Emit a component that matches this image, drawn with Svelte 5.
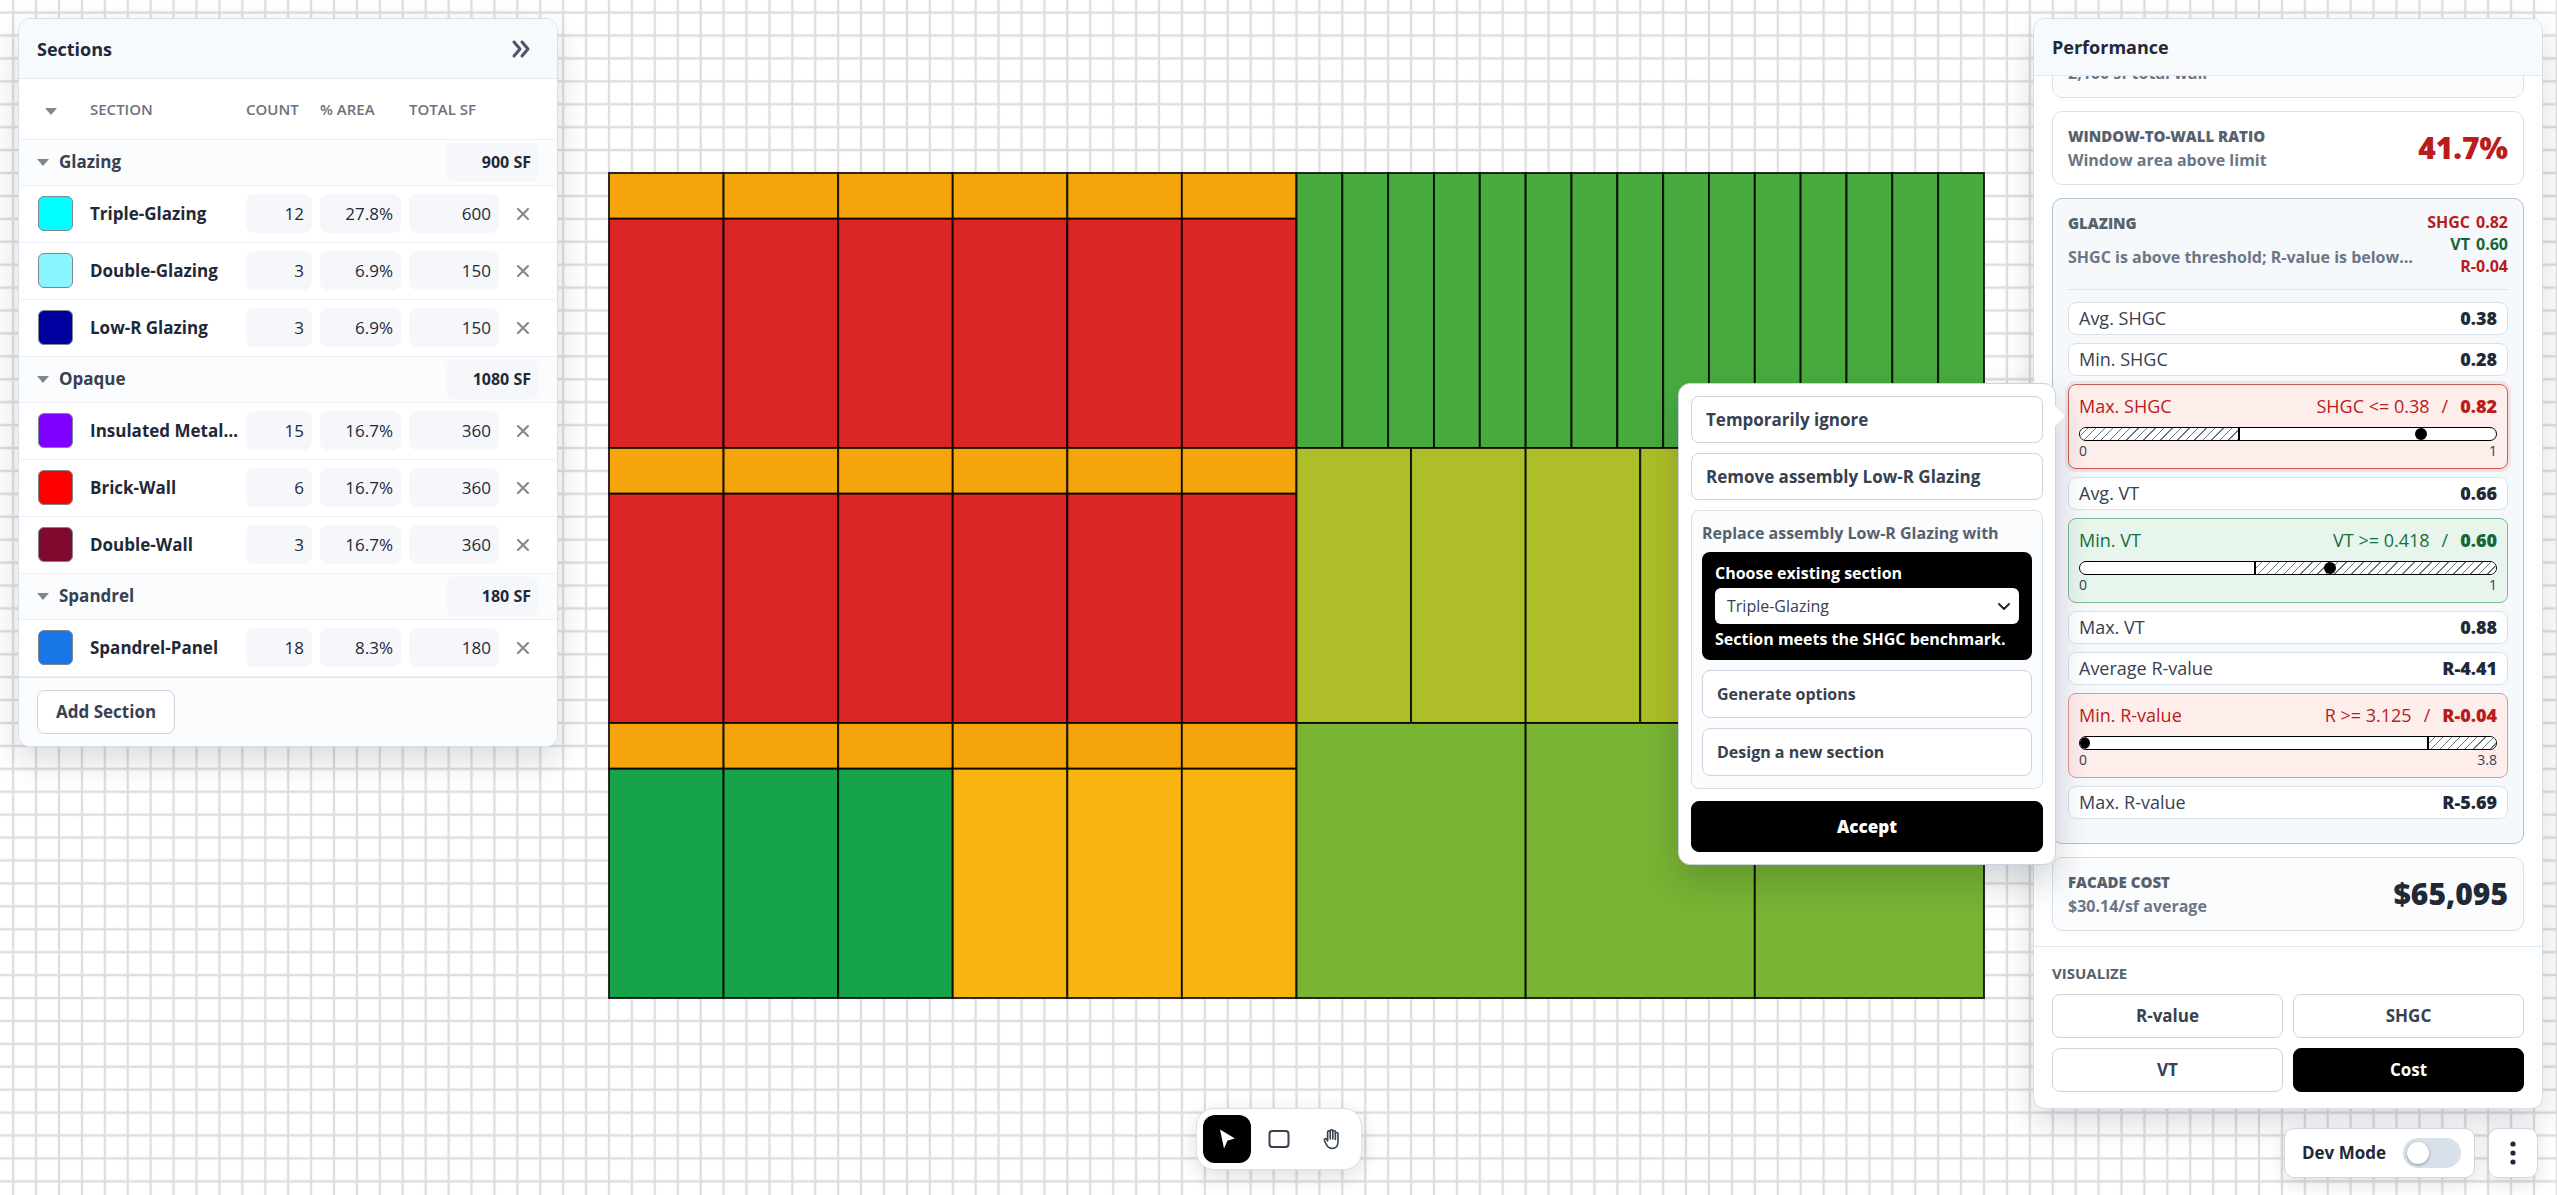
<script lang="ts">
	type Section = { name: string; color: string; count: number; area: string; sf: number };
	type Group = { name: string; total: string; rows: Section[] };
	type Metric = {
		label: string;
		value: string;
		rule?: string;
		status?: 'bad' | 'good';
		active?: boolean;
		max?: string;
		from?: number;
		to?: number;
		limit?: number;
		marker?: number;
	};

	const groups: Group[] = [
		{
			name: 'Glazing',
			total: '900 SF',
			rows: [
				{ name: 'Triple-Glazing', color: '#00ffff', count: 12, area: '27.8%', sf: 600 },
				{ name: 'Double-Glazing', color: '#88f5ff', count: 3, area: '6.9%', sf: 150 },
				{ name: 'Low-R Glazing', color: '#0000a0', count: 3, area: '6.9%', sf: 150 }
			]
		},
		{
			name: 'Opaque',
			total: '1080 SF',
			rows: [
				{ name: 'Insulated Metal Panel', color: '#8000ff', count: 15, area: '16.7%', sf: 360 },
				{ name: 'Brick-Wall', color: '#ff0000', count: 6, area: '16.7%', sf: 360 },
				{ name: 'Double-Wall', color: '#800a2d', count: 3, area: '16.7%', sf: 360 }
			]
		},
		{
			name: 'Spandrel',
			total: '180 SF',
			rows: [{ name: 'Spandrel-Panel', color: '#1777e5', count: 18, area: '8.3%', sf: 180 }]
		}
	];

	const metrics: Metric[] = [
		{ label: 'Avg. SHGC', value: '0.38' },
		{ label: 'Min. SHGC', value: '0.28' },
		{
			label: 'Max. SHGC',
			value: '0.82',
			rule: 'SHGC <= 0.38',
			status: 'bad',
			active: true,
			max: '1',
			from: 0,
			to: 38,
			limit: 38,
			marker: 82
		},
		{ label: 'Avg. VT', value: '0.66' },
		{
			label: 'Min. VT',
			value: '0.60',
			rule: 'VT >= 0.418',
			status: 'good',
			max: '1',
			from: 41.8,
			to: 100,
			limit: 41.8,
			marker: 60
		},
		{ label: 'Max. VT', value: '0.88' },
		{ label: 'Average R-value', value: 'R-4.41' },
		{
			label: 'Min. R-value',
			value: 'R-0.04',
			rule: 'R >= 3.125',
			status: 'bad',
			max: '3.8',
			from: 83.3,
			to: 100,
			limit: 83.3,
			marker: 1
		},
		{ label: 'Max. R-value', value: 'R-5.69' }
	];

	// Facade panels, in feet
	type Panel = { x: number; y: number; w: number; h: number; fill: string };

	function run(x: number, y: number, w: number, h: number, n: number, fill: string): Panel[] {
		return Array.from({ length: n }, (_, i) => ({ x: x + i * w, y, w, h, fill }));
	}

	const panels: Panel[] = [
		...run(0, 0, 5, 2, 6, '#f5a50b'),
		...run(0, 2, 5, 10, 6, '#dc2626'),
		...run(0, 12, 5, 2, 6, '#f5a50b'),
		...run(0, 14, 5, 10, 6, '#dc2626'),
		...run(0, 24, 5, 2, 6, '#f5a50b'),
		...run(0, 26, 5, 10, 3, '#16a34a'),
		...run(15, 26, 5, 10, 3, '#f8b411'),
		...run(30, 0, 2, 12, 15, '#48ab3f'),
		...run(30, 12, 5, 12, 6, '#adbe28'),
		...run(30, 24, 10, 12, 3, '#79b433')
	];

	const view = { x: 609, y: 173, zoom: 1375 / 60 };

	const modes = ['R-value', 'SHGC', 'VT', 'Cost'];
	let mode = $state('Cost');
	let tool = $state('select');
	let devMode = $state(false);
	let replacement = $state('Triple-Glazing');
</script>

<main class="workspace">
	<svg class="canvas" role="img" aria-label="Facade elevation">
		<defs>
			<pattern
				id="grid"
				width="1"
				height="1"
				patternUnits="userSpaceOnUse"
				patternTransform="translate({view.x} {view.y}) scale({view.zoom})"
			>
				<path d="M0 0V1M1 0V1M0 0H1M0 1H1" fill="none" stroke="#dedede" stroke-width="0.1" />
			</pattern>
		</defs>
		<rect width="100%" height="100%" fill="url(#grid)" />
		<g transform="translate({view.x} {view.y}) scale({view.zoom})">
			{#each panels as p}
				<rect class="panel-shape" x={p.x} y={p.y} width={p.w} height={p.h} fill={p.fill} />
			{/each}
		</g>
	</svg>

	<aside class="card-panel sections">
		<header class="panel-header">
			<h2>Sections</h2>
			<button class="icon-btn" aria-label="Collapse sections">
				<svg width="20" height="20" viewBox="0 0 20 20">
					<path d="M3 3l6 7-6 7M11 3l6 7-6 7" />
				</svg>
			</button>
		</header>
		<table>
			<colgroup>
				<col class="col-swatch" />
				<col />
				<col class="col-count" />
				<col class="col-area" />
				<col class="col-total" />
				<col class="col-remove" />
			</colgroup>
			<thead>
				<tr>
					<th class="toggle-all"><button class="caret" aria-label="Toggle all groups"></button></th>
					<th>SECTION</th>
					<th>COUNT</th>
					<th>% AREA</th>
					<th>TOTAL SF</th>
					<th></th>
				</tr>
			</thead>
			{#each groups as group}
				<tbody>
					<tr class="group-row">
						<td colspan="6">
							<div class="group">
								<button class="group-name"><span class="caret"></span>{group.name}</button>
								<span class="group-total">{group.total}</span>
							</div>
						</td>
					</tr>
					{#each group.rows as row}
						<tr>
							<td class="swatch-cell">
								<button class="swatch" style="background: {row.color}" aria-label="{row.name} color"
								></button>
							</td>
							<td class="name">{row.name}</td>
							<td><span class="num">{row.count}</span></td>
							<td><span class="num">{row.area}</span></td>
							<td><span class="num">{row.sf}</span></td>
							<td class="remove-cell">
								<button class="remove" aria-label="Remove {row.name}">
									<svg width="12" height="12" viewBox="0 0 12 12"><path d="M1 1l10 10M11 1L1 11" /></svg>
								</button>
							</td>
						</tr>
					{/each}
				</tbody>
			{/each}
		</table>
		<footer class="sections-footer">
			<button class="btn">Add Section</button>
		</footer>
	</aside>

	<aside class="card-panel performance">
		<header class="panel-header perf-header">
			<h2>Performance</h2>
		</header>
		<div class="perf-scroll">
			<section class="stat tinted">
				<p>2,160 sf total wall</p>
			</section>
			<section class="stat">
				<div>
					<h3>WINDOW-TO-WALL RATIO</h3>
					<p>Window area above limit</p>
				</div>
				<strong class="big bad-text">41.7%</strong>
			</section>
			<section class="glazing">
				<div class="glazing-head">
					<div class="glazing-title">
						<h3>GLAZING</h3>
						<p>SHGC is above threshold; R-value is below threshold</p>
					</div>
					<div class="readout">
						<div class="bad-text"><span>SHGC</span><span>0.82</span></div>
						<div class="good-text"><span>VT</span><span>0.60</span></div>
						<div class="bad-text"><span>R-0.04</span></div>
					</div>
				</div>
				<div class="metrics">
					{#each metrics as m}
						<div class="metric {m.status ?? ''}" class:active={m.active}>
							<div class="metric-line">
								<span>{m.label}</span>
								<span class="metric-value">
									{#if m.rule}<span>{m.rule}</span><span>/</span>{/if}
									<strong>{m.value}</strong>
								</span>
							</div>
							{#if m.rule}
								<div class="track">
									<div class="zone" style="left: {m.from}%; right: {100 - (m.to ?? 100)}%"></div>
									<div class="limit" style="left: {m.limit}%"></div>
									<div class="marker" style="left: {m.marker}%"></div>
								</div>
								<div class="scale"><span>0</span><span>{m.max}</span></div>
							{/if}
						</div>
					{/each}
				</div>
			</section>
			<section class="stat tinted">
				<div>
					<h3>FACADE COST</h3>
					<p>$30.14/sf average</p>
				</div>
				<strong class="big">$65,095</strong>
			</section>
		</div>
		<footer class="visualize">
			<h3>VISUALIZE</h3>
			<div class="modes">
				{#each modes as m}
					<button class="btn" class:selected={mode === m} onclick={() => (mode = m)}>{m}</button>
				{/each}
			</div>
		</footer>
	</aside>

	<div class="popover" role="dialog" aria-label="Fix Max. SHGC">
		<button class="btn option">Temporarily ignore</button>
		<button class="btn option">Remove assembly Low-R Glazing</button>
		<div class="replace">
			<p>Replace assembly Low-R Glazing with</p>
			<div class="choose">
				<label for="replacement">Choose existing section</label>
				<div class="select-wrap">
					<select id="replacement" bind:value={replacement}>
						<option>Triple-Glazing</option>
						<option>Double-Glazing</option>
					</select>
					<svg width="12" height="8" viewBox="0 0 12 8"><path d="M1 1l5 5 5-5" /></svg>
				</div>
				<span>Section meets the SHGC benchmark.</span>
			</div>
			<button class="btn option">Generate options</button>
			<button class="btn option">Design a new section</button>
		</div>
		<button class="btn selected accept">Accept</button>
	</div>

	<nav class="toolbar" aria-label="Tools">
		<button class:on={tool === 'select'} onclick={() => (tool = 'select')} aria-label="Select">
			<svg width="24" height="24" viewBox="0 0 24 24">
				<path d="M5 2.5L20 11.5L12.6 13.6L9 21.5Z" fill="currentColor" />
			</svg>
		</button>
		<button class:on={tool === 'rect'} onclick={() => (tool = 'rect')} aria-label="Rectangle">
			<svg width="24" height="24" viewBox="0 0 24 24">
				<rect x="2.5" y="4" width="19" height="16" rx="3" class="line" />
			</svg>
		</button>
		<button class:on={tool === 'pan'} onclick={() => (tool = 'pan')} aria-label="Pan">
			<svg width="24" height="24" viewBox="0 0 24 24">
				<path
					class="line hand"
					d="M8.6 14V5.2a1.3 1.3 0 0 1 2.6 0V12M11.2 12V4.200a1.300 1.300 0 0 1 2.600 0V12M13.800 12V4.800a1.300 1.300 0 0 1 2.600 0V12.500M16.400 12V6.800a1.300 1.300 0 0 1 2.600 0V14.500c0 4.500-2.200 7-5.800 7-3.300 0-4.700-1.500-6-4.300L5.500 13.800c-.4-1.100-.1-1.800.6-2.100.9-.3 1.700.2 2.500 2"
				/>
			</svg>
		</button>
	</nav>

	<div class="corner">
		<label class="dev">
			Dev Mode
			<input type="checkbox" role="switch" bind:checked={devMode} />
		</label>
		<button class="more" aria-label="More options">
			<svg width="8" height="26" viewBox="0 0 8 26" fill="currentColor">
				<circle cx="4" cy="4" r="2.6" /><circle cx="4" cy="13" r="2.6" /><circle cx="4" cy="22" r="2.6" />
			</svg>
		</button>
	</div>
</main>

<style>
	:global(body) {
		margin: 0;
		background: #fff;
	}

	.workspace {
		position: relative;
		height: 100vh;
		overflow: hidden;
		font-family: 'Open Sans', 'Noto Sans', sans-serif;
		font-size: 17px;
		line-height: 24px;
		color: #1f2937;
	}

	.workspace * {
		box-sizing: border-box;
	}

	h2,
	h3,
	p {
		margin: 0;
	}

	button,
	select {
		font: inherit;
		color: inherit;
		padding: 0;
		border: 0;
		background: none;
		cursor: pointer;
	}

	.canvas {
		position: absolute;
		inset: 0;
		width: 100%;
		height: 100%;
	}

	.panel-shape {
		stroke: #000;
		stroke-opacity: 0.8;
		stroke-width: 2px;
		vector-effect: non-scaling-stroke;
	}

	.card-panel {
		position: absolute;
		top: 18px;
		display: flex;
		flex-direction: column;
		background: #fff;
		border: 1px solid #d5dfe9;
		border-radius: 12px;
		box-shadow: 0 14px 32px rgba(15, 23, 42, 0.15);
		overflow: hidden;
	}

	.sections {
		left: 18px;
		width: 540px;
	}

	.performance {
		right: 14px;
		width: 510px;
		bottom: 86px;
	}

	.panel-header {
		display: flex;
		align-items: center;
		justify-content: space-between;
		flex: none;
		height: 60px;
		padding: 0 18px;
		background: #f7fafd;
		border-bottom: 1px solid #e2e8f0;
	}

	.perf-header {
		height: 57px;
	}

	h2 {
		font-size: 18px;
		font-weight: 700;
	}

	.icon-btn {
		display: flex;
		padding: 0 8px;
	}

	.icon-btn svg,
	.remove svg,
	.select-wrap svg {
		fill: none;
		stroke: #4b5563;
		stroke-width: 3px;
		stroke-linecap: round;
		stroke-linejoin: round;
	}

	table {
		width: 100%;
		table-layout: fixed;
		border-collapse: collapse;
	}

	.col-swatch {
		width: 71px;
	}

	.col-count {
		width: 74px;
	}

	.col-area {
		width: 89px;
	}

	.col-total {
		width: 98px;
	}

	.col-remove {
		width: 50px;
	}

	th,
	td {
		padding: 0 8px 0 0;
		text-align: left;
		border-bottom: 1px solid #edf1f5;
	}

	th {
		height: 60px;
		font-size: 15px;
		font-weight: 600;
		color: #6b7280;
		white-space: nowrap;
	}

	td {
		height: 57px;
	}

	.toggle-all {
		padding-left: 26px;
	}

	.caret {
		display: inline-block;
		border: 6px solid transparent;
		border-top: 7px solid #808791;
		border-bottom: 0;
	}

	.group-row td {
		height: 46px;
		padding: 0 18px;
		background: #fbfcfe;
	}

	.group {
		display: flex;
		align-items: center;
		justify-content: space-between;
	}

	.group-name {
		display: flex;
		align-items: center;
		gap: 10px;
		font-weight: 700;
		color: #374151;
	}

	.group-total,
	.num {
		display: block;
		padding: 0 8px;
		line-height: 39px;
		text-align: right;
		background: #f5f7fb;
		border-radius: 8px;
	}

	.group-total {
		width: 93px;
		font-size: 16px;
		font-weight: 700;
	}

	.swatch-cell {
		padding-left: 19px;
	}

	.swatch {
		display: block;
		width: 35px;
		height: 35px;
		border: 1px solid #7c8694;
		border-radius: 6px;
	}

	.name {
		font-weight: 700;
		white-space: nowrap;
		overflow: hidden;
		text-overflow: ellipsis;
	}

	.remove-cell {
		padding-left: 10px;
	}

	.remove {
		display: flex;
	}

	.remove svg {
		stroke: #80868f;
		stroke-width: 2px;
	}

	.btn {
		min-height: 44px;
		padding: 0 18px;
		font-weight: 700;
		color: #374151;
		background: #fff;
		border: 1px solid #cbd3de;
		border-radius: 8px;
	}

	.btn.selected {
		color: #fff;
		background: #000;
		border-color: #000;
	}

	.sections-footer {
		padding: 12px 18px;
		background: #fbfcfe;
		border-top: 1px solid #dfe5ec;
	}

	/* The list is anchored to its end, so the first card slides under the header */
	.perf-scroll {
		flex: 1;
		min-height: 0;
		display: flex;
		flex-direction: column;
		justify-content: flex-end;
		gap: 13px;
		padding: 0 18px 15px;
		overflow: hidden;
	}

	.stat {
		display: flex;
		flex: none;
		align-items: center;
		justify-content: space-between;
		padding: 12px 15px;
		border: 1px solid #d8e0e9;
		border-radius: 10px;
	}

	.tinted {
		background: #fbfcfe;
	}

	h3 {
		font-size: 15px;
		font-weight: 800;
		line-height: 24px;
		color: #56616e;
	}

	.stat p,
	.glazing-title p {
		font-size: 16px;
		font-weight: 700;
		color: #6b7685;
	}

	.big {
		font-size: 30px;
		font-weight: 800;
		line-height: 36px;
	}

	.bad-text {
		color: #b91c1c;
	}

	.good-text {
		color: #166534;
	}

	.glazing {
		flex: none;
		padding: 12px 15px 24px;
		background: #f6f9fc;
		border: 1px solid #b3c2d1;
		border-radius: 10px;
	}

	.glazing-head {
		display: flex;
		justify-content: space-between;
		gap: 14px;
		padding-bottom: 12px;
		border-bottom: 1px solid #dde4ec;
	}

	.glazing-title {
		flex: 1;
		min-width: 0;
	}

	.glazing-title p {
		margin-top: 10px;
		white-space: nowrap;
		overflow: hidden;
		text-overflow: ellipsis;
	}

	.readout {
		font-size: 16px;
		font-weight: 700;
		line-height: 22px;
	}

	.readout div {
		display: flex;
		justify-content: flex-end;
		gap: 6px;
	}

	.metrics {
		display: flex;
		flex-direction: column;
		gap: 8px;
		padding-top: 12px;
	}

	.metric {
		padding: 0 10px;
		color: #374151;
		background: #fff;
		border: 1px solid #d8e0e9;
		border-radius: 8px;
	}

	.metric-line {
		display: flex;
		justify-content: space-between;
		font-size: 18px;
		line-height: 31px;
	}

	.metric-value {
		display: flex;
		gap: 12px;
	}

	.metric strong {
		font-weight: 800;
		color: #1f2937;
	}

	.metric.bad,
	.metric.good {
		padding: 6px 10px 7px;
	}

	.metric.bad {
		color: #b91c1c;
		background: #fdedeb;
		border-color: #e09a92;
	}

	.metric.good {
		color: #15703a;
		background: #e7f5ed;
		border-color: #7dba95;
	}

	.metric.bad.active {
		border-color: #cf5b55;
		box-shadow: 0 0 0 3px rgba(185, 28, 28, 0.1);
	}

	.metric.bad strong {
		color: #b91c1c;
	}

	.metric.good strong {
		color: #166534;
	}

	.track {
		position: relative;
		height: 14px;
		margin-top: 5px;
		background: #fff;
		border: 1px solid #000;
		border-radius: 7px;
		overflow: hidden;
	}

	.zone {
		position: absolute;
		top: 0;
		bottom: 0;
		background: repeating-linear-gradient(135deg, #fff 0 5px, #6b7280 5px 6px);
	}

	.limit {
		position: absolute;
		top: 0;
		bottom: 0;
		width: 2px;
		background: #000;
	}

	.marker {
		position: absolute;
		top: 0;
		width: 12px;
		height: 12px;
		margin-left: -6px;
		background: #000;
		border-radius: 50%;
	}

	.scale {
		display: flex;
		justify-content: space-between;
		font-size: 14px;
		line-height: 20px;
		color: #374151;
	}

	.visualize {
		flex: none;
		padding: 14px 18px 16px;
		border-top: 1px solid #e2e8f0;
	}

	.visualize h3 {
		margin-bottom: 9px;
		font-weight: 700;
	}

	.modes {
		display: grid;
		grid-template-columns: 1fr 1fr;
		gap: 10px;
	}

	.popover {
		position: absolute;
		top: 383px;
		right: 501px;
		display: flex;
		flex-direction: column;
		gap: 10px;
		width: 378px;
		padding: 12px;
		background: #fff;
		border: 1px solid #cbd3de;
		border-radius: 12px;
		box-shadow: 0 16px 36px rgba(15, 23, 42, 0.2);
	}

	.popover::after {
		content: '';
		position: absolute;
		top: 22px;
		right: -10px;
		border: 10px solid transparent;
		border-left-color: #fff;
		border-right: 0;
	}

	.option {
		min-height: 47px;
		padding: 0 14px;
		text-align: left;
	}

	.replace {
		display: flex;
		flex-direction: column;
		gap: 10px;
		padding: 10px 10px 12px;
		font-size: 16px;
		background: #fbfcfe;
		border: 1px solid #d8e0e9;
		border-radius: 8px;
	}

	.replace p {
		margin-bottom: -3px;
		font-weight: 700;
		color: #56616e;
	}

	.replace .option {
		min-height: 48px;
	}

	.choose {
		display: flex;
		flex-direction: column;
		gap: 3px;
		padding: 9px 13px;
		font-weight: 700;
		color: #fff;
		background: #000;
		border-radius: 8px;
	}

	.select-wrap {
		position: relative;
		height: 36px;
	}

	select {
		appearance: none;
		width: 100%;
		height: 36px;
		padding: 0 12px;
		font-weight: 400;
		color: #374151;
		background: #fff;
		border-radius: 6px;
	}

	.select-wrap svg {
		position: absolute;
		top: 15px;
		right: 9px;
		stroke: #1f2937;
		stroke-width: 2px;
		pointer-events: none;
	}

	.accept {
		min-height: 51px;
		margin-top: 2px;
		font-weight: 800;
	}

	.toolbar {
		position: absolute;
		bottom: 25px;
		left: 50%;
		display: flex;
		gap: 4px;
		padding: 6px;
		background: #fff;
		border: 1px solid #dcdfe3;
		border-radius: 18px;
		box-shadow: 0 6px 20px rgba(15, 23, 42, 0.14);
		transform: translateX(-50%);
	}

	.toolbar button {
		display: grid;
		place-items: center;
		width: 48px;
		height: 48px;
		color: #374151;
		border-radius: 12px;
	}

	.toolbar button.on {
		color: #fff;
		background: #000;
	}

	.line {
		fill: none;
		stroke: currentColor;
		stroke-width: 2px;
		stroke-linecap: round;
		stroke-linejoin: round;
	}

	.hand {
		stroke-width: 1.6;
	}

	.corner {
		position: absolute;
		right: 19px;
		bottom: 17px;
		display: flex;
		gap: 13px;
	}

	.dev,
	.more {
		display: flex;
		align-items: center;
		justify-content: center;
		height: 50px;
		background: #fff;
		border: 1px solid #cfd7e1;
		border-radius: 10px;
		box-shadow: 0 6px 18px rgba(15, 23, 42, 0.12);
	}

	.dev {
		gap: 17px;
		padding: 0 13px 0 17px;
		font-weight: 700;
	}

	.more {
		width: 50px;
	}

	.dev input {
		appearance: none;
		display: flex;
		align-items: center;
		width: 58px;
		height: 30px;
		margin: 0;
		padding: 0 4px;
		background: #d8e0ea;
		border-radius: 15px;
	}

	.dev input::before {
		content: '';
		width: 22px;
		height: 22px;
		background: #fff;
		border-radius: 50%;
		box-shadow: 0 1px 3px rgba(15, 23, 42, 0.4);
	}

	.dev input:checked {
		justify-content: flex-end;
		background: #000;
	}
</style>
